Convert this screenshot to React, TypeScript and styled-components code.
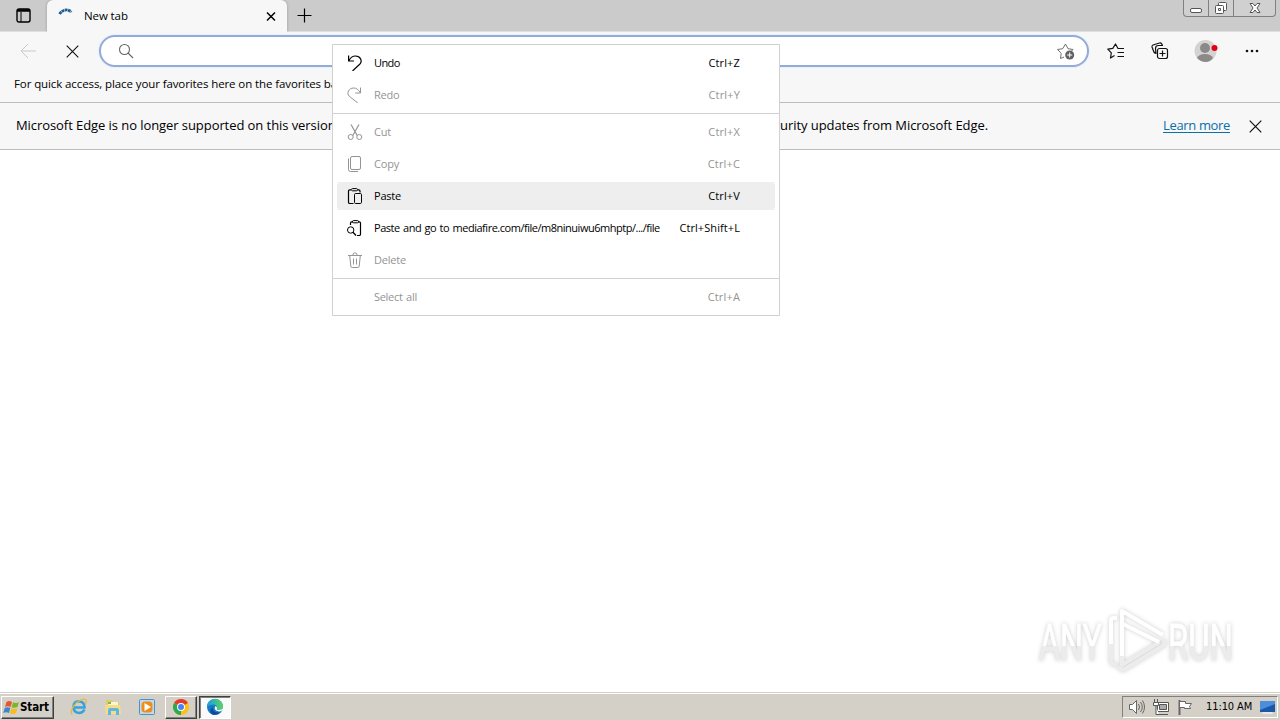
import { ReactNode } from "react";
import styled, { createGlobalStyle } from "styled-components";

const GlobalStyle = createGlobalStyle`
    * {
        box-sizing: border-box;
    }

    body {
        margin: 0;
        overflow: hidden;
        background: #fff;
        color: #000;
        font-family: "Open Sans", "Noto Sans", sans-serif;
    }
`;

const Screen = styled.div`
    position: relative;
    width: 1280px;
    height: 720px;
    display: flex;
    flex-direction: column;
    overflow: hidden;
    background: #fff;
`;

const Label = styled.span<{ $size: number; $spacing?: number }>`
    font-size: ${(p) => p.$size}px;
    letter-spacing: ${(p) => p.$spacing ?? 0}px;
    line-height: 18px;
    white-space: nowrap;
`;

const TabStrip = styled.div`
    height: 32px;
    display: flex;
    align-items: flex-start;
    background: #cbcbcb;
    border-bottom: 1px solid #dedede;
`;

const StripButton = styled.div<{ $width: number }>`
    width: ${(p) => p.$width}px;
    height: 31px;
    display: flex;
    align-items: center;
    justify-content: center;
`;

const Tab = styled.div`
    width: 240px;
    height: 32px;
    display: flex;
    align-items: center;
    padding: 0 9px 0 10px;
    border-radius: 6px 6px 0 0;
    background: #f7f7f7;
    box-shadow: 0 0 3px rgba(0, 0, 0, 0.25);
    clip-path: inset(0 -4px 0 -4px);
`;

const TabTitle = styled(Label)`
    flex: 1;
    margin-left: 9px;
`;

const WindowControls = styled.div`
    display: flex;
    height: 17px;
    margin: 0 4px 0 auto;
    border: 1px solid #808080;
    border-top: none;
    border-radius: 0 0 4px 4px;
    background: #d0d0d0;
`;

const WindowButton = styled.div<{ $width: number }>`
    width: ${(p) => p.$width}px;
    display: flex;
    justify-content: center;

    & + & {
        border-left: 1px solid #808080;
    }
`;

const Toolbar = styled.div`
    height: 38px;
    display: flex;
    align-items: center;
    background: #f7f7f7;
`;

const ToolButton = styled.div<{ $width: number }>`
    width: ${(p) => p.$width}px;
    display: flex;
    justify-content: center;
`;

const AddressBar = styled.div`
    width: 990px;
    height: 32px;
    margin-left: 5px;
    padding: 0 12px 0 17px;
    display: flex;
    align-items: center;
    justify-content: space-between;
    border: 2px solid #93abd6;
    border-radius: 16px;
    background: #fff;
    box-shadow: 0 0 1px 1px #e6f1fb;
`;

const FavoritesBar = styled.div`
    height: 33px;
    display: flex;
    align-items: flex-start;
    padding: 5px 14px 0;
    background: #f7f7f7;
    border-bottom: 1px solid #bdbdbd;
`;

const InfoBar = styled.div`
    height: 47px;
    padding: 0 16px;
    display: flex;
    align-items: center;
    background: #f7f7f7;
    border-bottom: 1px solid #bdbdbd;
`;

const Message = styled.div`
    width: 972px;
    padding-bottom: 2px;
    display: flex;
    justify-content: space-between;
`;

const LearnMore = styled.a`
    margin: 0 19px 2px auto;
    color: #0b6fa8;
    font-size: 13px;
    letter-spacing: -0.35px;
    line-height: 18px;
    text-decoration: underline;
    text-underline-offset: 2px;
`;

const Page = styled.div`
    flex: 1;
    display: flex;
    align-items: flex-end;
    justify-content: flex-end;
    padding: 0 34px 6px;
`;

const WatermarkSvg = styled.svg`
    overflow: visible;
    filter: drop-shadow(0 0 2px #ccc);
`;

const Menu = styled.div`
    position: absolute;
    left: 332px;
    top: 44px;
    width: 448px;
    height: 272px;
    display: flex;
    flex-direction: column;
    padding: 2px 4px;
    border: 1px solid #d2d2d2;
    background: #fff;
`;

const MenuRow = styled.div<{ $disabled?: boolean; $active?: boolean }>`
    height: 28px;
    margin: 2px 0;
    padding: 0 35px 0 10px;
    display: flex;
    align-items: center;
    border-radius: 3px;
    color: ${(p) => (p.$disabled ? "#949494" : "#000")};
    background: ${(p) => (p.$active ? "#eee" : "none")};
`;

const MenuIcon = styled.span`
    width: 16px;
    height: 16px;
    margin-right: 11px;
`;

const MenuText = styled(Label)`
    flex: 1;
    word-spacing: 1px;
`;

const Separator = styled.div`
    height: 1px;
    margin: 2px -4px;
    background: #d2d2d2;
`;

const Taskbar = styled.div`
    height: 28px;
    display: flex;
    align-items: center;
    padding: 1px 2px 0 1px;
    border-top: 1px solid #d4d0c8;
    background: linear-gradient(#fff 0 1px, #d4d0c8 1px);
    font-family: "DejaVu Sans Condensed", "DejaVu Sans", sans-serif;
`;

const StartButton = styled.div`
    width: 53px;
    height: 23px;
    display: flex;
    align-items: center;
    padding-left: 1px;
    margin-right: 8px;
    border: 1px solid;
    border-color: #fff #404040 #404040 #fff;
    box-shadow: inset -1px -1px #808080;
`;

const StartText = styled(Label)`
    font-weight: bold;
`;

const QuickLaunch = styled.div`
    display: flex;
    width: 103px;
`;

const TaskButton = styled.div<{ $state?: "raised" | "pressed" }>`
    width: ${(p) => (p.$state ? 32 : 34)}px;
    height: 23px;
    margin-right: ${(p) => (p.$state ? 2 : 0)}px;
    display: flex;
    align-items: center;
    justify-content: center;
    border: 1px solid transparent;
    ${(p) =>
        p.$state === "raised" &&
        "border-color: #fff #404040 #404040 #fff; box-shadow: inset -1px -1px #808080;"}
    ${(p) =>
        p.$state === "pressed" &&
        "border-color: #404040 #fff #fff #404040; background: #fafafa; box-shadow: inset 1px 1px #808080;"}
`;

const Tray = styled.div`
    height: 22px;
    width: 156px;
    margin-left: auto;
    padding: 0 2px 0 5px;
    display: flex;
    align-items: center;
    border: 1px solid;
    border-color: #808080 #fff #fff #808080;
`;

const TrayIcon = styled.span`
    width: 24px;
    height: 18px;
`;

const Clock = styled(Label)`
    margin: 0 auto 0 6px;
`;

interface IconProps {
    w: number;
    h?: number;
    stroke?: string;
    sw?: number;
    children: ReactNode;
}

function Icon({ w, h = w, stroke = "currentColor", sw = 1, children }: IconProps) {
    return (
        <svg
            width={w}
            height={h}
            viewBox={`0 0 ${w} ${h}`}
            fill="none"
            stroke={stroke}
            strokeWidth={sw}
            strokeLinejoin="round"
            display="block"
        >
            {children}
        </svg>
    );
}

const icons = {
    undo: <path d="M1.600 .5v5.500h5.400M1.800 5.800C3.500 2.500 5.800 1 8.500 1c5 0 7.300 5.200 4.200 8.300L5.500 16" strokeWidth="1.200" />,
    redo: <path d="M13.500 .5v5.500H8.200M13.300 5.800C11.500 2.500 9.300 1 6.700 1 1.600 1-.8 6.200 2.300 9.300l8.500 6.700" />,
    cut: (
        <>
            <path d="M4 .5l6.200 11M12 .5L5.800 11.500" strokeWidth="1.200" />
            <circle cx="3.700" cy="13" r="2.500" />
            <circle cx="12.300" cy="13" r="2.500" />
        </>
    ),
    copy: (
        <>
            <rect x="3.500" y=".5" width="10" height="13" rx="1.500" />
            <path d="M1.500 2.500v11q0 2 2 2h7.500" />
        </>
    ),
    paste: (
        <>
            <path d="M6.500 15.500H2.700q-1.200 0-1.200-1.200V3q0-1.200 1.200-1.200H4M10.500 1.800h1.300Q13 1.800 13 3v1.500" strokeWidth="1.200" />
            <rect x="4.500" y=".6" width="6" height="2.200" rx="1" />
            <rect x="7.500" y="5.500" width="7" height="10" rx="1.200" />
        </>
    ),
    pasteGo: (
        <>
            <path d="M3.500 5V3q0-1.200 1.200-1.200H6M11 1.800h1.300q1.200 0 1.200 1.200v11.300q0 1.200-1.200 1.200H10" strokeWidth="1.200" />
            <rect x="5.500" y=".6" width="6" height="2.200" rx="1" />
            <circle cx="3.700" cy="10" r="3.200" />
            <path d="M6 12.300l3 3.200" strokeWidth="1.300" />
        </>
    ),
    trash: (
        <path d="M1 3.500h14M5.800 3.300q0-2.500 2.200-2.500t2.200 2.500M2.700 3.600l1.100 10.600q.1 1.300 1.400 1.300h5.600q1.300 0 1.400-1.300l1.100-10.600M6.500 6.500v6M9.500 6.500v6" />
    ),
};

interface MenuItemProps {
    icon?: keyof typeof icons;
    text: string;
    keys?: string;
    disabled?: boolean;
    active?: boolean;
    spacing?: number;
    keySpacing?: number;
}

function MenuItem({ icon, text, keys, disabled, active, spacing = -0.2, keySpacing = 0.15 }: MenuItemProps) {
    return (
        <MenuRow $disabled={disabled} $active={active}>
            <MenuIcon>{icon && <Icon w={16}>{icons[icon]}</Icon>}</MenuIcon>
            <MenuText $size={11} $spacing={spacing}>
                {text}
            </MenuText>
            <Label $size={11} $spacing={keySpacing}>
                {keys}
            </Label>
        </MenuRow>
    );
}

function Watermark() {
    return (
        <WatermarkSvg width="208" height="80" viewBox="0 0 208 80">
            <defs>
                <linearGradient id="fade" x1="0" y1="0" x2="0" y2="1">
                    <stop offset="0.55" stopColor="#fff" />
                    <stop offset="0.55" stopColor="#ececec" />
                </linearGradient>
            </defs>
            <g fill="url(#fade)" stroke="url(#fade)" strokeWidth=".8" fontFamily="Roboto, sans-serif" fontSize="50">
                <text x="1" y="54" textLength="63" lengthAdjust="spacingAndGlyphs">
                    ANY
                </text>
                <text x="130" y="54" textLength="65" lengthAdjust="spacingAndGlyphs">
                    RUN
                </text>
            </g>
            <g fill="none" strokeWidth="4" strokeLinejoin="round">
                <path d="M79 12h-3q-3 0-3 3v25" stroke="#fff" />
                <path d="M84 48v11l38-23" stroke="#ececec" />
                <path d="M84 50V5l41 24M85 18l36 18" stroke="#fff" />
                <path d="M73 38v16q0 5 6 5M80 61l5 3 41-25v-6" stroke="#ececec" />
            </g>
        </WatermarkSvg>
    );
}

function WindowsFlag() {
    return (
        <Icon w={17} h={17} stroke="none">
            <path d="M3.500 3Q6 1 9 3L7.500 8Q5 6.500 2 8z" fill="#e9552b" />
            <path d="M10 3.200q3 1.600 6-.2L14.500 8q-3 1.500-6 .2z" fill="#79b82b" />
            <path d="M1.700 9q3-1.600 5.600 0L6 14Q3 12.300.3 14z" fill="#3b86d1" />
            <path d="M8.300 9.200q3 1.500 6 0L13 14q-3 2-6 .2z" fill="#f8bc1c" />
        </Icon>
    );
}

function Ie() {
    return (
        <Icon w={18}>
            <path d="M14.500 11.500Q12.700 15 9 15q-5.500-.5-5.500-6T9 3.300q5.500.4 5.600 6.200H5" stroke="#35a3dc" strokeWidth="2.600" />
            <path d="M2.300 16.500C-1 14 4 5 11 2q4-1.700 5 .2t-1 4" stroke="#e9b83c" strokeWidth="1.300" />
        </Icon>
    );
}

function Explorer() {
    return (
        <Icon w={18} stroke="none">
            <path d="M2 2h6l1 2h6v12H2z" fill="#e9c965" />
            <path d="M4 4h10v5H4z" fill="#fff6cf" />
            <path d="M1 7h15l1 9H2z" fill="#f5dc86" />
            <path d="M4 17v-5q0-2 2-2h7q2 0 2 2v5h-3v-4H7v4z" fill="#62b6df" />
            <path d="M4 4h3v2H4z" fill="#6bbd5d" />
        </Icon>
    );
}

function MediaPlayer() {
    return (
        <Icon w={18} stroke="none">
            <rect x="1.500" y="1.500" width="15" height="15" rx="1" fill="#bcdcf2" stroke="#4a91c8" />
            <rect x="3.500" y="3.500" width="11" height="11" rx="3.500" fill="#f28b1a" />
            <path d="M6.500 5v8l6.500-4z" fill="#fff" />
        </Icon>
    );
}

function Chrome() {
    return (
        <Icon w={18} stroke="none">
            <circle cx="9" cy="9" r="8" fill="#fbc116" />
            <path d="M9 9L2.070 5a8 8 0 0 1 13.860 0z" fill="#e33b2e" />
            <path d="M9 9l0 8A8 8 0 0 1 2.070 5z" fill="#2da94f" />
            <circle cx="9" cy="9" r="4" fill="#fff" />
            <circle cx="9" cy="9" r="3" fill="#4285f4" />
        </Icon>
    );
}

function Edge() {
    return (
        <Icon w={18} stroke="none">
            <defs>
                <linearGradient id="edgeTop">
                    <stop stopColor="#1b9de2" />
                    <stop offset="1" stopColor="#5bd55b" />
                </linearGradient>
            </defs>
            <circle cx="9" cy="9" r="8" fill="#1678ca" />
            <path d="M1 9a8 8 0 0 1 16-.5q0 3.500-4 3.500-3 0-2-2 0-3.500-4-3.500T1 9z" fill="url(#edgeTop)" />
            <path d="M6.500 9Q6 15 14 14.500 10 18 6 16.200 2.500 13 6.500 9z" fill="#104a91" />
            <path d="M9.500 8q-2.200 3 1.500 5 2.500 1 5-.5l1.500-1.500v-1q-2 2-4.500 2-3 0-2-2 0-1-1.500-2z" fill="#fff" />
        </Icon>
    );
}

function CloseGlyph({ size, sw = 1 }: { size: number; sw?: number }) {
    return (
        <Icon w={size} sw={sw} stroke="#111">
            <path d={`M.7.7L${size - 0.7} ${size - 0.7}M${size - 0.7}.7L.7 ${size - 0.7}`} />
        </Icon>
    );
}

export default function App() {
    return (
        <>
            <GlobalStyle />
            <Screen>
                <TabStrip>
                    <StripButton $width={47}>
                        <Icon w={15} h={15} stroke="#000" sw={1.4}>
                            <rect x="1" y="1" width="13" height="13" rx="2" />
                            <path d="M1 2.500h13" strokeWidth="2.500" />
                            <path d="M5 4v10" strokeWidth="1" />
                        </Icon>
                    </StripButton>
                    <Tab>
                        <Icon w={18} h={16} stroke="#205f96" sw={2.8}>
                            <path d="M2.500 6Q8-1 14.500 4" strokeDasharray="2.800 .5" />
                        </Icon>
                        <TabTitle $size={11.5} $spacing={-0.1}>
                            New tab
                        </TabTitle>
                        <Icon w={14} stroke="#000" sw={1.5}>
                            <path d="M3 3.500l8 8M11 3.500l-8 8" />
                        </Icon>
                    </Tab>
                    <StripButton $width={34}>
                        <Icon w={15} stroke="#000" sw={1.2}>
                            <path d="M7.500.5v14M.5 7.500h14" />
                        </Icon>
                    </StripButton>
                    <WindowControls>
                        <WindowButton $width={24}>
                            <Icon w={14} h={16} stroke="#555">
                                <rect x="1.500" y="8.500" width="11" height="4" rx="1.500" fill="#fff" />
                            </Icon>
                        </WindowButton>
                        <WindowButton $width={25}>
                            <Icon w={14} h={16} stroke="#555">
                                <rect x="4.500" y="2.500" width="8" height="8" rx="1" fill="#fff" />
                                <rect x="1.500" y="5.500" width="8" height="8" rx="1" fill="#fff" />
                                <rect x="4.500" y="8.500" width="2" height="2" />
                            </Icon>
                        </WindowButton>
                        <WindowButton $width={42}>
                            <Icon w={12} h={16} stroke="#555">
                                <path d="M1 3.500h3l2 2.500 2-2.500h3L8 8l3 4.500H8L6 10l-2 2.500H1L4 8z" fill="#fff" />
                            </Icon>
                        </WindowButton>
                    </WindowControls>
                </TabStrip>

                <Toolbar>
                    <ToolButton $width={56}>
                        <Icon w={16} stroke="#c9c9c9">
                            <path d="M16 8H1M8 1L1 8l7 7" />
                        </Icon>
                    </ToolButton>
                    <ToolButton $width={32}>
                        <CloseGlyph size={13} sw={1.1} />
                    </ToolButton>
                    <ToolButton $width={6} />
                    <AddressBar>
                        <Icon w={16} stroke="#666" sw={1.1}>
                            <circle cx="6.500" cy="6.500" r="5" />
                            <path d="M10 10l5 5" />
                        </Icon>
                        <Icon w={18} stroke="#707070">
                            <path d="M7 15l-3.500 1.500.7-5.200-3.700-3.800 5.200-.8L8.500 2l2.500 4.700 5 .8-1.500 1.500" />
                            <circle cx="12.700" cy="13" r="4.500" fill="#606060" stroke="none" />
                            <path d="M12.700 10.500v5M10.200 13h5" stroke="#fff" />
                        </Icon>
                    </AddressBar>
                    <ToolButton $width={54}>
                        <Icon w={18} stroke="#111" sw={1.2}>
                            <path d="M7.500 13.500L3.500 16l.8-5.200L.8 7.200l5-.8L8.500 2 11 6.500h6M10.500 10.500H17M10.500 14.500H17" />
                        </Icon>
                    </ToolButton>
                    <ToolButton $width={34}>
                        <Icon w={18} stroke="#111" sw={1.2}>
                            <path d="M5 11.500Q3 11 2.500 9L1 5q-.3-1.300 1-2l6.500-2q1.500-.3 2.300 1l.7 1.500H7.500Q4.500 3.500 4.500 6.500z" />
                            <rect x="6.500" y="6.500" width="10" height="10" rx="2" fill="#f7f7f7" />
                            <path d="M11.500 8.500v6M8.500 11.500h6" />
                        </Icon>
                    </ToolButton>
                    <ToolButton $width={58}>
                        <Icon w={24} stroke="none">
                            <circle cx="11.500" cy="12" r="11" fill="#d5d3d1" />
                            <circle cx="11" cy="9" r="5" fill="#8c8a89" />
                            <path d="M3 19q2-4 8-4t8 4q-3 4-7.500 4T3 19z" fill="#8c8a89" />
                            <circle cx="20.500" cy="9" r="3" fill="#e30016" />
                        </Icon>
                    </ToolButton>
                    <ToolButton $width={34}>
                        <Icon w={14} h={4} stroke="none">
                            <g fill="#111">
                                <circle cx="2" cy="2" r="1.300" />
                                <circle cx="7" cy="2" r="1.300" />
                                <circle cx="12" cy="2" r="1.300" />
                            </g>
                        </Icon>
                    </ToolButton>
                </Toolbar>

                <FavoritesBar>
                    <Label $size={11.5} $spacing={-0.1}>
                        For quick access, place your favorites here on the favorites bar.
                    </Label>
                </FavoritesBar>

                <InfoBar>
                    <Message>
                        <Label $size={13} $spacing={-0.07}>
                            Microsoft Edge is no longer supported on this version
                        </Label>
                        <Label $size={13} $spacing={-0.07}>
                            security updates from Microsoft Edge.
                        </Label>
                    </Message>
                    <LearnMore>Learn more</LearnMore>
                    <CloseGlyph size={13} sw={1.2} />
                    <ToolButton $width={2} />
                </InfoBar>

                <Page>
                    <Watermark />
                </Page>

                <Taskbar>
                    <StartButton>
                        <WindowsFlag />
                        <StartText $size={11.5} $spacing={-0.1}>
                            Start
                        </StartText>
                    </StartButton>
                    <QuickLaunch>
                        <TaskButton>
                            <Ie />
                        </TaskButton>
                        <TaskButton>
                            <Explorer />
                        </TaskButton>
                        <TaskButton>
                            <MediaPlayer />
                        </TaskButton>
                    </QuickLaunch>
                    <TaskButton $state="raised">
                        <Chrome />
                    </TaskButton>
                    <TaskButton $state="pressed">
                        <Edge />
                    </TaskButton>
                    <Tray>
                        <TrayIcon>
                            <Icon w={18} stroke="#666">
                                <path d="M1.500 6.500h3l4-4v13l-4-4h-3z" fill="#fff" />
                                <path d="M10.500 6q2 3 0 6M12.500 4q3.500 5 0 10M14.500 2.500q4 6.500 0 13" />
                            </Icon>
                        </TrayIcon>
                        <TrayIcon>
                            <Icon w={18} stroke="#555">
                                <rect x="5.500" y="4.500" width="11" height="9" fill="#fff" />
                                <rect x="7.500" y="6.500" width="7" height="5" fill="#aaa" />
                                <path d="M7 16.500h9M2.500 1v3M5.500 1v3M1.500 4.500h5v3h-5zM4 8v8.500h3" fill="#fff" />
                            </Icon>
                        </TrayIcon>
                        <TrayIcon>
                            <Icon w={18} stroke="#666">
                                <path d="M3.500 17V2" strokeWidth="2" />
                                <path d="M3.500 3.500h6v2h6l-2 3 1 2h-6v-1h-5z" fill="#fff" />
                            </Icon>
                        </TrayIcon>
                        <Clock $size={11} $spacing={-0.1}>
                            11:10 AM
                        </Clock>
                        <Icon w={16} stroke="none">
                            <rect x="1" y="2" width="15" height="11" fill="#1d58a8" />
                            <path d="M1 2h15v3L1 11z" fill="#4c8edb" />
                            <path d="M4 13h9l1 2H3z" fill="#e8e8e8" />
                        </Icon>
                    </Tray>
                </Taskbar>

                <Menu>
                    <MenuItem icon="undo" text="Undo" keys="Ctrl+Z" spacing={-0.6} />
                    <MenuItem icon="redo" text="Redo" keys="Ctrl+Y" disabled />
                    <Separator />
                    <MenuItem icon="cut" text="Cut" keys="Ctrl+X" disabled />
                    <MenuItem icon="copy" text="Copy" keys="Ctrl+C" disabled />
                    <MenuItem icon="paste" text="Paste" keys="Ctrl+V" active />
                    <MenuItem
                        icon="pasteGo"
                        text="Paste and go to mediafire.com/file/m8ninuiwu6mhptp/.../file"
                        keys="Ctrl+Shift+L"
                        spacing={-0.48}
                        keySpacing={0.08}
                    />
                    <MenuItem icon="trash" text="Delete" disabled />
                    <Separator />
                    <MenuItem text="Select all" keys="Ctrl+A" disabled spacing={-0.3} />
                </Menu>
            </Screen>
        </>
    );
}
